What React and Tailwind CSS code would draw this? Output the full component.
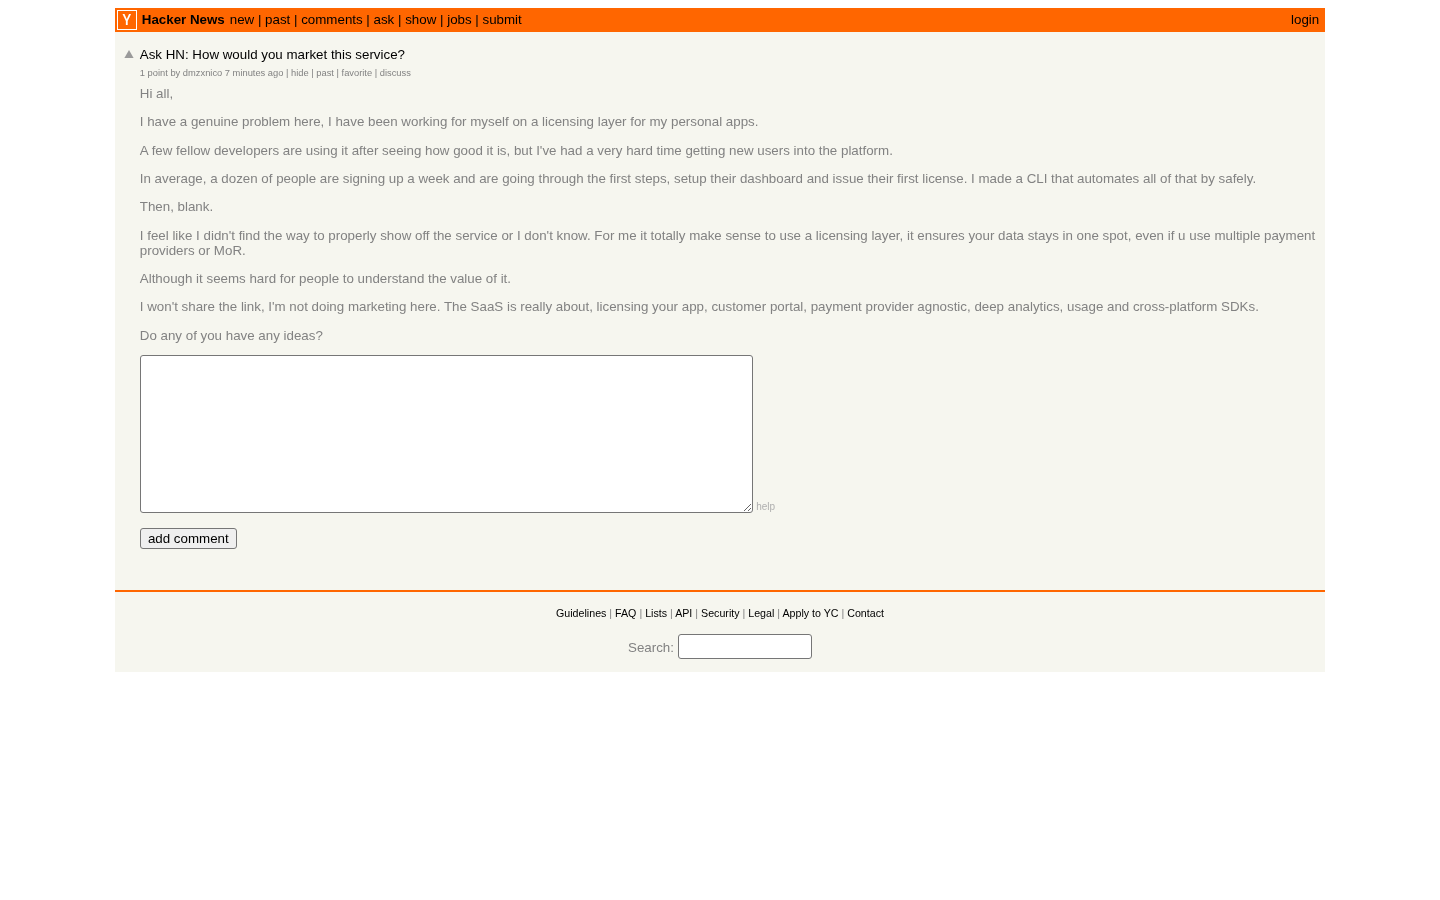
const font = "font-['Liberation_Sans',Arial,sans-serif]";

const navLinks = ['new', 'past', 'comments', 'ask', 'show', 'jobs', 'submit'];
const footerLinks = ['Guidelines', 'FAQ', 'Lists', 'API', 'Security', 'Legal', 'Apply to YC', 'Contact'];
const metaLinks = ['hide', 'past', 'favorite', 'discuss'];

const paragraphs = [
  'Hi all,',
  'I have a genuine problem here, I have been working for myself on a licensing layer for my personal apps.',
  "A few fellow developers are using it after seeing how good it is, but I've had a very hard time getting new users into the platform.",
  'In average, a dozen of people are signing up a week and are going through the first steps, setup their dashboard and issue their first license. I made a CLI that automates all of that by safely.',
  'Then, blank.',
  "I feel like I didn't find the way to properly show off the service or I don't know. For me it totally make sense to use a licensing layer, it ensures your data stays in one spot, even if u use multiple payment providers or MoR.",
  'Although it seems hard for people to understand the value of it.',
  "I won't share the link, I'm not doing marketing here. The SaaS is really about, licensing your app, customer portal, payment provider agnostic, deep analytics, usage and cross-platform SDKs.",
  'Do any of you have any ideas?',
];

export default function App() {
  return (
    <div className={`${font} min-h-[900px] pt-2 text-[13.33px] leading-[15px] will-change-transform`}>
      <div className="mx-auto w-[1210.4px] bg-[#f6f6ef]">
        {/* Header */}
        <div className="flex h-6 items-center bg-[#ff6600] pl-0.5 pr-1.5">
          <div className="flex h-5 w-5 items-center justify-center border border-white font-['Roboto',sans-serif] text-[14px] font-medium text-white">Y</div>
          <b className="mb-px ml-[5px] text-black">Hacker News</b>
          <div className="mb-px ml-[5px] text-black">
            {navLinks.map((link, i) => (
              <span key={link}>
                {i > 0 && ' | '}
                <a href="#">{link}</a>
              </span>
            ))}
          </div>
          <a href="#" className="mb-px ml-auto text-black">login</a>
        </div>

        {/* Story */}
        <div className="flex pt-[15px]">
          <div className="w-[25px] shrink-0 pl-[9.5px] pt-[3px]">
            <svg width="10" height="8" viewBox="0 0 10 8" className="block">
              <path d="M5 0 L9.6 8 L0.4 8 Z" fill="#9a9a9a" />
            </svg>
          </div>
          <div className="min-w-0 flex-1 pr-[5px]">
            <a href="#" className="block text-black">Ask HN: How would you market this service?</a>
            <div className="mt-[6px] text-[9.33px] leading-[11px] text-[#828282]">
              1 point by dmzxnico 7 minutes ago
              {metaLinks.map((link) => (
                <span key={link}> | <a href="#">{link}</a></span>
              ))}
            </div>
            <div className="mt-[7px] flex flex-col gap-[13.33px] text-[#828282]">
              {paragraphs.map((text) => (
                <p key={text}>{text}</p>
              ))}
            </div>
            <div className="mt-[12px] flex items-end">
              <textarea className="block h-[158px] w-[613px] rounded-[3px] border border-[#767676] bg-white"></textarea>
              <a href="#" className="mb-px ml-[3.4px] text-[10px] leading-[11px] text-[#afafaf]">help</a>
            </div>
            <button className="mt-[15px] block h-[21px] w-[97px] rounded-[3px] border border-[#767676] bg-[#efefef] text-[13.33px] text-black">
              add comment
            </button>
          </div>
        </div>

        {/* Footer */}
        <div className="mt-[41px] h-0.5 bg-[#ff6600]"></div>
        <div className="flex flex-col items-center pb-[13px] pt-[15px]">
          <div className="text-[10.67px] leading-3 text-[#828282]">
            {footerLinks.map((link, i) => (
              <span key={link}>
                {i > 0 && ' | '}
                <a href="#" className="text-black">{link}</a>
              </span>
            ))}
          </div>
          <div className="mt-[15px] flex items-center text-[#828282]">
            <span className="mt-0.5">Search:</span>
            <input className="ml-1 h-[25px] w-[134px] rounded-[3px] border border-[#767676] bg-white" />
          </div>
        </div>
      </div>
    </div>
  );
}
